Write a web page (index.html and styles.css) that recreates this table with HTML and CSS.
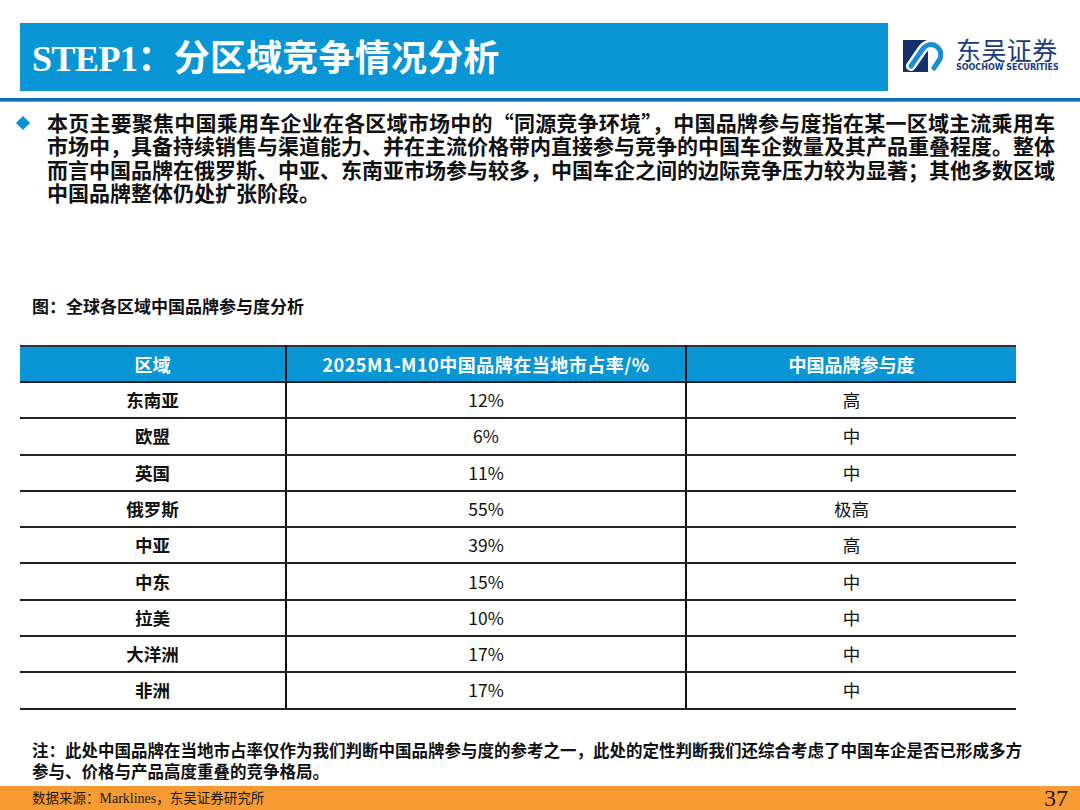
FILE: index.html
```html
<!DOCTYPE html>
<html lang="zh-CN">
<head>
<meta charset="utf-8">
<title>STEP1：分区域竞争情况分析</title>
<link rel="stylesheet" href="styles.css">
</head>
<body>
<div class="page">
  <header class="top">
    <div class="title-bar">
      <h1><span class="latin">STEP1</span>：分区域竞争情况分析</h1>
    </div>
    <div class="logo">
      <svg class="logo-mark" viewBox="0 0 46 36" width="46" height="36" aria-hidden="true">
        <rect x="0" y="2" width="25" height="32" fill="#142f6e"/>
        <path d="M8 28 L19 12 Q24 5 31 7 Q40 11 37 21 L31 30" fill="none" stroke="#ffffff" stroke-width="10" stroke-linecap="round" stroke-linejoin="round"/>
        <path d="M8 28 L19 12 Q24 5 31 7 Q40 11 37 21 L31 30" fill="none" stroke="#1b8fd6" stroke-width="5" stroke-linecap="round" stroke-linejoin="round"/>
      </svg>
      <div class="logo-text">
        <div class="logo-cn">东吴证券</div>
        <div class="logo-en">SOOCHOW SECURITIES</div>
      </div>
    </div>
  </header>
  <div class="rule"></div>

  <div class="bullet">
    <span class="diamond"></span>
    <p class="lead">
      <span class="line just">本页主要聚焦中国乘用车企业在各区域市场中的“同源竞争环境”，中国品牌参与度指在某一区域主流乘用车</span>
      <span class="line just">市场中，具备持续销售与渠道能力、并在主流价格带内直接参与竞争的中国车企数量及其产品重叠程度。整体</span>
      <span class="line just">而言中国品牌在俄罗斯、中亚、东南亚市场参与较多，中国车企之间的边际竞争压力较为显著；其他多数区域</span>
      <span class="line">中国品牌整体仍处扩张阶段。</span>
    </p>
  </div>

  <div class="caption">图：全球各区域中国品牌参与度分析</div>

  <table class="data">
    <thead>
      <tr><th class="c1">区域</th><th class="c2">2025M1-M10中国品牌在当地市占率/%</th><th class="c3">中国品牌参与度</th></tr>
    </thead>
    <tbody>
      <tr><td class="c1">东南亚</td><td>12%</td><td>高</td></tr>
      <tr><td class="c1">欧盟</td><td>6%</td><td>中</td></tr>
      <tr><td class="c1">英国</td><td>11%</td><td>中</td></tr>
      <tr><td class="c1">俄罗斯</td><td>55%</td><td>极高</td></tr>
      <tr><td class="c1">中亚</td><td>39%</td><td>高</td></tr>
      <tr><td class="c1">中东</td><td>15%</td><td>中</td></tr>
      <tr><td class="c1">拉美</td><td>10%</td><td>中</td></tr>
      <tr><td class="c1">大洋洲</td><td>17%</td><td>中</td></tr>
      <tr><td class="c1">非洲</td><td>17%</td><td>中</td></tr>
    </tbody>
  </table>

  <p class="note">注：此处中国品牌在当地市占率仅作为我们判断中国品牌参与度的参考之一，此处的定性判断我们还综合考虑了中国车企是否已形成多方参与、价格与产品高度重叠的竞争格局。</p>

  <footer class="foot">
    <span class="source">数据来源：<span class="latin">Marklines</span>，东吴证券研究所</span>
    <span class="pageno">37</span>
  </footer>
</div>
</body>
</html>
```

FILE: styles.css
```css
html, body {
  margin: 0;
  padding: 0;
  background: #ffffff;
}

body {
  font-family: "Noto Sans CJK SC", "Noto Sans", sans-serif;
  color: #111111;
}

.page {
  width: 1080px;
  height: 810px;
  display: flex;
  flex-direction: column;
  overflow: hidden;
}

.top {
  display: flex;
  align-items: flex-start;
  padding-top: 23px;
  height: 68px;
}

.title-bar {
  margin-left: 20px;
  width: 868px;
  height: 68px;
  background: #0a96d4;
  display: flex;
  align-items: center;
}

.title-bar h1 {
  margin: 0 0 0 12px;
  color: #ffffff;
  font-size: 36px;
  font-weight: 700;
  line-height: 1;
  letter-spacing: 0.2px;
}

.title-bar .latin {
  font-family: "Liberation Serif", "Times New Roman", serif;
  font-size: 36px;
  letter-spacing: -0.5px;
}

.logo {
  display: flex;
  align-items: flex-start;
  margin-left: 15px;
  margin-top: 15px;
  gap: 7px;
}

.logo-mark {
  display: block;
}

.logo-text {
  display: flex;
  flex-direction: column;
  margin-top: -2px;
}

.logo-cn {
  font-size: 25px;
  line-height: 27px;
  height: 27px;
  color: #1b3a7c;
  font-weight: 400;
  letter-spacing: 0.4px;
}

.logo-en {
  font-family: "DejaVu Sans", sans-serif;
  font-size: 8px;
  font-weight: 700;
  color: #1b3a7c;
  line-height: 9px;
  letter-spacing: 0;
  white-space: nowrap;
}

.rule {
  margin-top: 7px;
  height: 3px;
  background: #0b6fbf;
  border-bottom: 1px solid #5aa3dc;
}

.bullet {
  display: flex;
  align-items: flex-start;
  margin-top: 9px;
}

.diamond {
  width: 10px;
  height: 10px;
  background: #0a90d6;
  transform: rotate(45deg);
  margin-left: 18px;
  margin-top: 7px;
  flex: none;
}

.lead {
  margin: 0 0 0 19px;
  width: 1008px;
  font-size: 21px;
  font-weight: 700;
  line-height: 23.4px;
  color: #111111;
}

.lead .line {
  display: block;
  white-space: nowrap;
}

.lead .just {
  text-align: justify;
  text-align-last: justify;
  white-space: normal;
}

.caption {
  margin: 90px 0 0 32px;
  font-size: 17px;
  font-weight: 700;
  line-height: 22px;
  color: #111111;
}

.data {
  margin: 28px 0 0 20px;
  width: 996px;
  border-collapse: collapse;
  table-layout: fixed;
}

.data th,
.data td {
  height: 34.3px;
  padding: 0;
  text-align: center;
  vertical-align: middle;
  border-bottom: 2px solid #222222;
  line-height: 22px;
}

.data th {
  background: #0a96d4;
  color: #ffffff;
  font-size: 18px;
  font-weight: 700;
  border-top: 2px solid #333333;
}

.data th.c2 {
  letter-spacing: 0.5px;
}

.data th.c1 { width: 265px; }
.data th.c2 { width: 398px; }

.data td {
  font-size: 17.5px;
  font-weight: 400;
  color: #111111;
}

.data td.c1 {
  font-weight: 700;
}

.data .c1,
.data td:nth-child(2),
.data th.c2 {
  border-right: 2px solid #111111;
}

.note {
  margin: 30px 0 0 32px;
  width: 996px;
  font-size: 16.5px;
  font-weight: 700;
  line-height: 21px;
  color: #111111;
}

.foot {
  margin-top: auto;
  height: 24px;
  background: #f89b32;
  display: flex;
  align-items: center;
  justify-content: space-between;
  padding: 0 12px 0 32px;
}

.source {
  font-size: 13.5px;
  color: #1a1a1a;
  line-height: 24px;
}

.source .latin {
  font-family: "Liberation Serif", "Times New Roman", serif;
  font-size: 14px;
}

.pageno {
  font-family: "Liberation Serif", "Times New Roman", serif;
  font-size: 24px;
  line-height: 24px;
  color: #1a1a1a;
}
```
